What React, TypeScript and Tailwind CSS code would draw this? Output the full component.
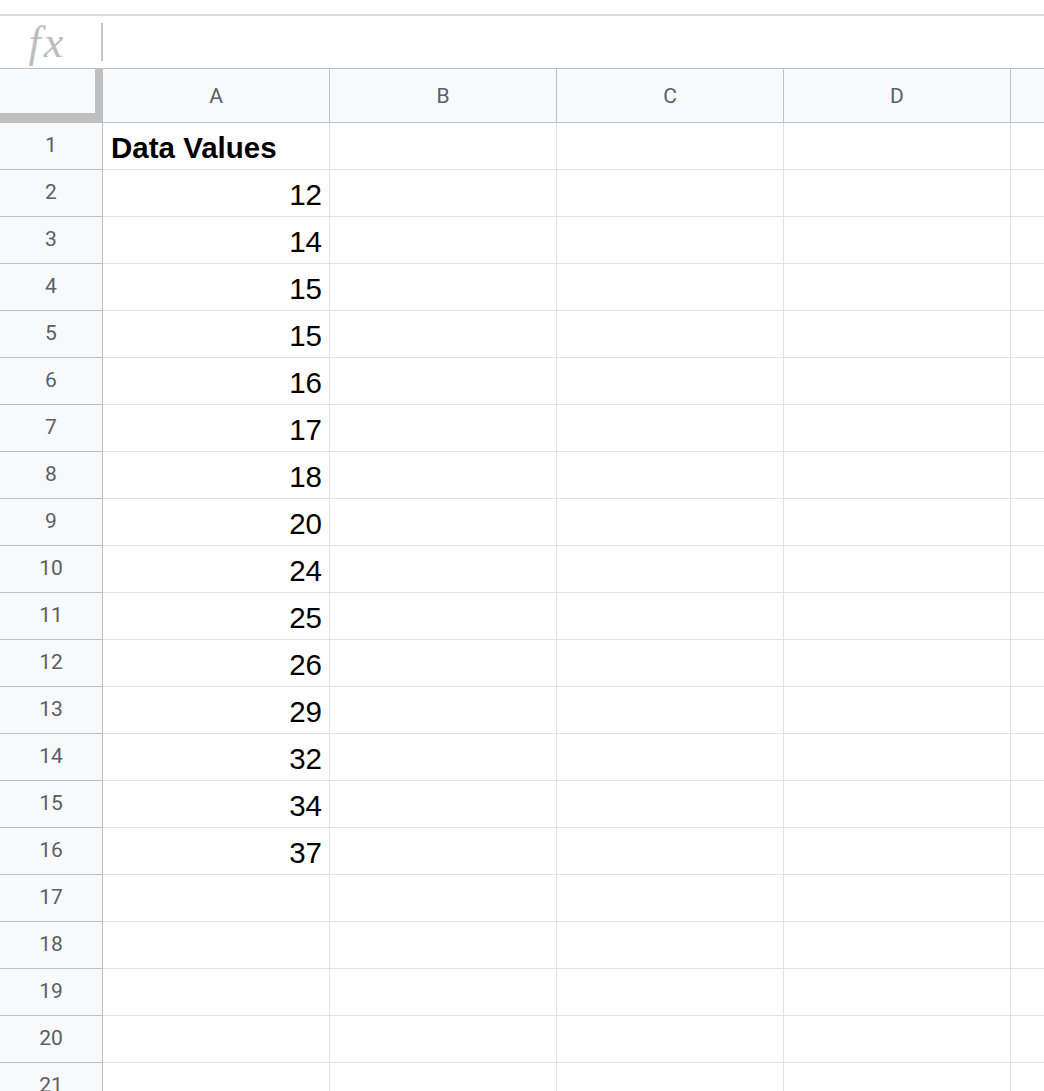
const COLUMNS = ["A", "B", "C", "D", ""];

const DATA: Record<number, string> = {
  2: "12",
  3: "14",
  4: "15",
  5: "15",
  6: "16",
  7: "17",
  8: "18",
  9: "20",
  10: "24",
  11: "25",
  12: "26",
  13: "29",
  14: "32",
  15: "34",
  16: "37",
};

const ROWS = Array.from({ length: 22 }, (_, i) => i + 1);

export default function App() {
  return (
    <div className="w-[1044px] h-[1091px] overflow-hidden bg-white">
      {/* Formula bar */}
      <div className="mt-[14px] border-t-2 border-[#dadce0] h-[54px] flex items-center">
        <div className="w-[101px] flex justify-center">
          <span className="font-['Liberation_Serif',serif] italic text-[44px] leading-none text-[#bdbdbd] mt-[2px] tracking-[3px] pr-[6px]">
            fx
          </span>
        </div>
        <div className="w-[2px] h-[38px] bg-[#c8c8c8]" />
      </div>

      {/* Grid */}
      <div className="border-t border-[#c0c0c0] grid grid-cols-[103px_227px_227px_227px_227px_227px]">
        {/* Corner */}
        <div className="h-[54px] bg-[#c0c0c0]">
          <div className="w-[95px] h-[44px] bg-[#f8f9fa]" />
        </div>
        {COLUMNS.map((col, i) => (
          <div
            key={`h${i}`}
            className="h-[54px] bg-[#f8f9fa] border-r border-b border-[#c0c0c0] flex items-center justify-center pt-[2px] font-['Roboto',sans-serif] text-[21px] text-[#5b5e62]"
          >
            {col}
          </div>
        ))}

        {ROWS.map((r) => (
          <>
            <div
              key={`r${r}`}
              className="h-[47px] bg-[#f8f9fa] border-r border-b border-[#c0c0c0] flex items-center justify-center font-['Roboto',sans-serif] text-[21px] text-[#5b5e62]"
            >
              {r}
            </div>
            {COLUMNS.map((_, c) => (
              <div
                key={`c${r}-${c}`}
                className="h-[47px] border-r border-b border-[#e2e2e3] flex items-end font-['Liberation_Sans',Arial,sans-serif] text-[29.5px] leading-none text-black"
              >
                {c === 0 && r === 1 && (
                  <span className="pl-[8px] pb-[7px] font-bold">Data Values</span>
                )}
                {c === 0 && DATA[r] && (
                  <span className="ml-auto pr-[7px] pb-[7px]">{DATA[r]}</span>
                )}
              </div>
            ))}
          </>
        ))}
      </div>
    </div>
  );
}
